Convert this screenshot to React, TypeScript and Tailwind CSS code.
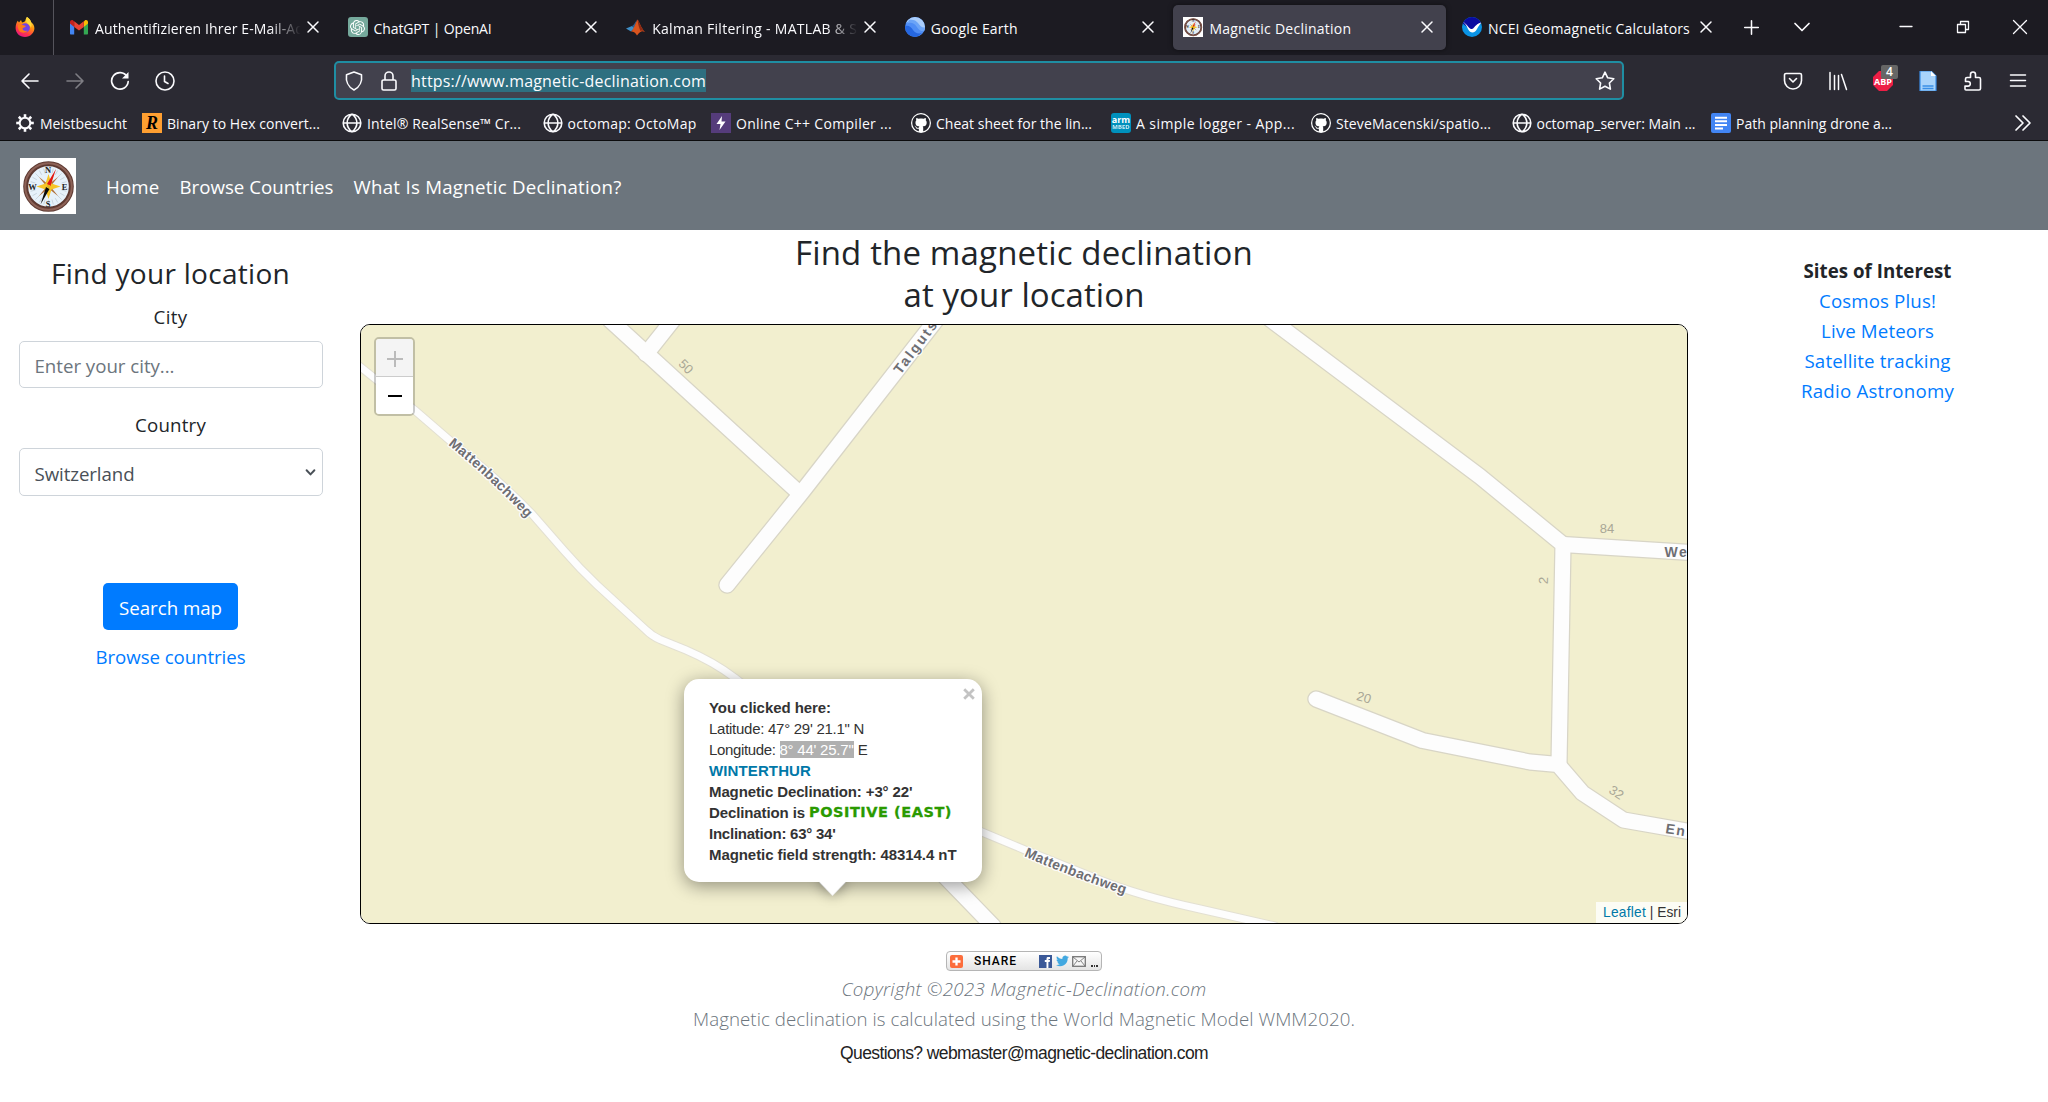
import { useLayoutEffect, useRef, useState, type ReactNode } from "react";
import { FaGithub } from "react-icons/fa";
import { SiOpenai } from "react-icons/si";

/* Text whose tracking is adjusted so that the run is exactly `w` pixels wide. */
function Fit({ w, className = "", children }: { w: number; className?: string; children: string }) {
  const ref = useRef<HTMLSpanElement>(null);
  const [ls, setLs] = useState(0);
  useLayoutEffect(() => {
    if (ref.current) {
      const natural = ref.current.getBoundingClientRect().width;
      setLs((w - natural) / children.length);
    }
  }, []);
  return (
    <span ref={ref} className={`inline-block whitespace-pre ${className}`} style={{ letterSpacing: `${ls}px` }}>
      {children}
    </span>
  );
}

/* ---------- favicons ---------- */
const Firefox = () => (
  <svg width="20" height="20" viewBox="0 0 20 20">
    <defs>
      <linearGradient id="ff" x1="0.8" y1="0" x2="0.3" y2="1">
        <stop offset="0" stopColor="#fff44f" />
        <stop offset="0.4" stopColor="#ff980e" />
        <stop offset="0.75" stopColor="#ff3647" />
        <stop offset="1" stopColor="#e31587" />
      </linearGradient>
    </defs>
    <path d="M12 0c2.500 1.500 3.600 3.200 4 5 1.800 1.300 3.400 3.500 3.400 6.300C19.400 16 15.300 20 10 20S.6 16 .6 11c0-3.200 1-5.600 2.200-7.200L4 5.500 6 3l1 2.500c1.200 0 2.700-.6 3.300-1.700C10.700 2.500 11 1 12 0z" fill="url(#ff)" />
    <circle cx="10.300" cy="10.800" r="4.600" fill="#7542e5" />
    <path d="M3 8c2-1 4-.5 5.500.3L11 9c-1 1.800-3 1.500-3.500 2.500.2 2 2.500 3 5 2-1.500 2.600-5.500 3-8 .8C3.300 12.800 2.600 10 3 8z" fill="#ff7a1a" />
    <path d="M12 0c2.500 1.500 3.600 3.200 4 5 .8 2 .8 4-.2 6-.3-3-3.400-3.700-4.300-6C11 3.500 11 1.500 12 0z" fill="#ffd83a" />
  </svg>
);
const Gmail = () => (
  <svg width="20" height="20" viewBox="0 0 20 20">
    <path d="M1 5.500v11c0 .6.400 1 1 1h3.200V9.500z" fill="#4285f4" />
    <path d="M19 5.500v11c0 .6-.4 1-1 1h-3.200V9.500z" fill="#34a853" />
    <path d="M1 5v1.500l4.200 3.600V4.700L4 3.300C2.800 2.400 1 3.300 1 5z" fill="#c5221f" />
    <path d="M19 5v1.500l-4.200 3.600V4.700L16 3.300c1.200-.9 3 0 3 1.700z" fill="#fbbc04" />
    <path d="M5.200 4.300 10 8l4.800-3.700v5.600L10 13.600 5.200 9.900z" fill="#ea4335" />
  </svg>
);
const ChatGpt = () => (
  <span className="flex size-5 items-center justify-center rounded-[3px] bg-[#75a99c] text-white">
    <SiOpenai size={15} />
  </span>
);
const Matlab = () => (
  <svg width="20" height="20" viewBox="0 0 20 20">
    <path d="M0 11.500 6 9l2.500 2-3.500 3.500z" fill="#3f8fc8" />
    <path d="M6 9c2-1 3-3.500 5-6.500L8.500 11z" fill="#2a5f93" />
    <path d="M5 14.500C7.500 13 9 7 11.500 2.500 13 4 15 11 19 15c-3-1.500-4.500-1-8 3.500-1.500-2.500-3-4-6-4z" fill="#d9541e" />
    <path d="M11.500 2.500C13 4 15 11 19 15c-3-1.500-3-2-4.500-1-1.500-3-2.500-7-3-11.500z" fill="#8c2a14" />
  </svg>
);
const Earth = () => (
  <svg width="20" height="20" viewBox="0 0 20 20">
    <defs>
      <clipPath id="ec"><circle cx="10" cy="10" r="10" /></clipPath>
    </defs>
    <g clipPath="url(#ec)">
      <rect width="20" height="20" fill="#4e8df5" />
      <path d="M0 0h20v13c-3 1-5-1-7-4S7 4 3 5L0 6z" fill="#a9cdfb" />
      <path d="M4 3c3-1 7 0 9 3s4 5 7 4.500V14c-4 1-6-1-8.500-4.500S6 5 2 6.500z" fill="#6ba4f7" />
      <path d="M0 9c4-1 6 1 8 4s5 4 9 3l-5 4H0z" fill="#2567e0" />
    </g>
  </svg>
);
const Noaa = () => (
  <svg width="20" height="20" viewBox="0 0 20 20">
    <defs>
      <clipPath id="nc"><circle cx="10" cy="10" r="10" /></clipPath>
    </defs>
    <g clipPath="url(#nc)">
      <rect width="20" height="20" fill="#0a94e6" />
      <path d="M0 0h20v5l-8 8h-3L0 6z" fill="#0a0aa0" />
      <path d="M1 5c2 1 3.500 2.500 5 4.500C7.500 11.500 8.500 12 10 12s3-3.500 6.500-5.500L20 5c-2 2-3.500 4-5 7-1.500 2.600-3 3.500-4.500 3.500S7 14.500 6 12C5 9.500 3.500 7 1 5z" fill="#fff" />
    </g>
  </svg>
);

function Compass({ size }: { size: number }) {
  const ticks = Array.from({ length: 24 }, (_, i) => i * 15);
  return (
    <svg width={size} height={size} viewBox="0 0 56 56" className="shrink-0 bg-white">
      <circle cx="28.500" cy="28.500" r="22.800" fill="#e6f1fa" stroke="#5e3a32" strokeWidth="5" />
      <circle cx="28.500" cy="28.500" r="23.300" fill="none" stroke="#8d6257" strokeWidth="2" />
      {ticks.map((a) => (
        <path key={a} d="M28.500 10v5" stroke="#b9c6d0" strokeWidth="0.600" transform={`rotate(${a} 28.500 28.500)`} />
      ))}
      <path d="m18.500 18.500 8 6.500h4l8-6.500-6.500 8v4l6.500 8-8-6.500h-4l-8 6.500 6.500-8v-4z" fill="#b0703a" />
      <path d="m28.500 16 3 9.500 9 3-9 3-3 9.500-3-9.500-9-3 9-3z" fill="#f7c526" />
      <path d="M36 11l-5.500 17-3.500-2z" fill="#e3170f" />
      <path d="M20.500 46.500l5.500-17.500 3.500 2z" fill="#0a0a0a" />
      <circle cx="28.500" cy="28.500" r="1.800" fill="#e0b520" />
      <g fontFamily="Liberation Serif, serif" fontWeight="700" fontSize="8.500" fill="#222" textAnchor="middle">
        <text x="28" y="15">N</text>
        <text x="28" y="48.500">S</text>
        <text x="12.500" y="31.500">W</text>
        <text x="44.500" y="31.500">E</text>
      </g>
    </svg>
  );
}

/* ---------- small line icons ---------- */
function Line({ d, size = 20, sw = 1.6, className = "" }: { d: string; size?: number; sw?: number; className?: string }) {
  return (
    <svg width={size} height={size} viewBox="0 0 20 20" fill="none" stroke="currentColor" strokeWidth={sw} strokeLinecap="round" strokeLinejoin="round" className={`shrink-0 ${className}`}>
      <path d={d} />
    </svg>
  );
}
const X = "M5 5l10 10M15 5L5 15";

const Globe = () => <Line sw={1.6} d="M10 1.200a8.800 8.800 0 1 0 0 17.600a8.800 8.800 0 1 0 0-17.600M1.500 10h17M10 1.200C3.500 6 3.500 14 10 18.800M10 1.200c6.500 4.800 6.500 12.800 0 17.600" />;
const Gear = () => (
  <svg width="20" height="20" viewBox="0 0 20 20" fill="none" stroke="#fbfbfe">
    <circle cx="10" cy="10" r="5.300" strokeWidth="2" />
    {[0, 45, 90, 135, 180, 225, 270, 315].map((a) => (
      <path key={a} d="M10 4.500V1.200" strokeWidth="2.600" transform={`rotate(${a} 10 10)`} />
    ))}
  </svg>
);
const HexR = () => (
  <span className="flex size-5 items-center justify-center bg-[#ff9f31] font-['Liberation_Serif',serif] text-[18px] leading-none font-bold text-black italic">R</span>
);
const Bolt = () => (
  <svg width="20" height="20" viewBox="0 0 20 20">
    <rect width="20" height="20" fill="#553c7b" />
    <path d="M11 3 5.500 11h4L8.500 17 14.500 8.500h-4z" fill="#fff" />
  </svg>
);
const Github = () => (
  <span className="flex size-5 items-center justify-center rounded-full bg-white text-[#24242c]">
    <FaGithub size={18} />
  </span>
);
const Arm = () => (
  <span className="flex size-5 flex-col items-center justify-center rounded-[3px] bg-[#0091bd] font-['Open_Sans',sans-serif] font-bold text-white">
    <span className="text-[9px] leading-[8px]">arm</span>
    <span className="text-[6px] leading-[7px] opacity-80">MBED</span>
  </span>
);
const Docs = () => (
  <svg width="20" height="20" viewBox="0 0 20 20">
    <rect width="20" height="20" rx="2" fill="#4285f4" />
    <path d="M4 4.700h12M4 8.300h12M4 11.900h12M4 15.500h8" stroke="#fff" strokeWidth="2" />
  </svg>
);

/* ---------- browser chrome ---------- */
function Tab({ icon, title, w, active = false, fade = false }: { icon: ReactNode; title: string; w: number; active?: boolean; fade?: boolean }) {
  return (
    <div className="h-full w-[278.600px] shrink-0 px-[3px] pt-[5px] pb-[5px]">
      <div className={`flex h-[45px] items-center rounded-[5px] pr-[10px] pb-[1px] pl-[10px] ${active ? "bg-[#42414d] shadow-[0_0_5px_rgba(0,0,0,.5)]" : ""}`}>
        <span className="flex size-5 shrink-0">{icon}</span>
        <div className={`ml-[6px] flex-1 overflow-hidden ${fade ? "[mask-image:linear-gradient(to_right,#000_84%,transparent_99%)]" : ""}`}>
          <Fit w={w} className="text-[14px] leading-5">{title}</Fit>
        </div>
        <Line d={X} size={20} sw={1.500} className="-mr-[1px]" />
      </div>
    </div>
  );
}

function Bookmark({ icon, title, w, slot }: { icon: ReactNode; title: string; w: number; slot: string }) {
  return (
    <div className={`flex shrink-0 items-center gap-[5px] ${slot}`}>
      <span className="flex size-5 shrink-0">{icon}</span>
      <Fit w={w} className="mt-[2px] text-[14px] leading-5">{title}</Fit>
    </div>
  );
}

function BrowserChrome() {
  return (
    <header className="bg-[#2b2a33] text-[#fbfbfe]">
      <div className="flex h-[55px] items-center bg-[#1c1b22]">
        <div className="flex h-full w-[54px] items-center border-r border-[#55545c] pb-[1px] pl-[15px]"><Firefox /></div>
        <div className="ml-[2px] flex h-full">
          <Tab icon={<Gmail />} title="Authentifizieren Ihrer E-Mail-Ad" w={209} fade />
          <Tab icon={<ChatGpt />} title="ChatGPT | OpenAI" w={118} />
          <Tab icon={<Matlab />} title="Kalman Filtering - MATLAB & S" w={205} fade />
          <Tab icon={<Earth />} title="Google Earth" w={87} />
          <Tab icon={<Compass size={20} />} title="Magnetic Declination" w={142} active />
          <Tab icon={<Noaa />} title="NCEI Geomagnetic Calculators" w={202} />
        </div>
        <div className="flex items-center pb-[1px]">
          <Line d="M10 2v16M2 10h16" size={17} sw={1.800} className="ml-[15px]" />
          <Line d="M3 6.500l7 7 7-7" size={20} sw={1.700} className="ml-[32px]" />
          <Line d="M4 9.500h12" size={20} sw={1.300} className="ml-[84px]" />
          <Line d="M4.500 7.500h8v8h-8zM7.500 7.500v-3h8v8h-3" size={20} sw={1.300} className="ml-[37px]" />
          <Line d="M3.500 3.500l13 13M16.500 3.500l-13 13" size={20} sw={1.300} className="ml-[37px]" />
        </div>
      </div>

      <div className="flex h-[51px] items-center">
        <div className="flex w-[334px] gap-[25px] pl-[20px]">
          <Line d="M18 10H2M9 3L2 10l7 7" />
          <Line d="M2 10h16M11 3l7 7-7 7" className="opacity-40" />
          <svg width="20" height="20" viewBox="0 0 20 20" fill="none" stroke="currentColor" strokeWidth="1.700" strokeLinecap="round">
            <path d="M17 5.500a8.300 8.300 0 1 0 1.200 5" />
            <path d="M18.500 1v6.500H12z" fill="currentColor" stroke="none" />
          </svg>
          <Line d="M10 1a9 9 0 1 0 0 18a9 9 0 1 0 0-18M9.500 5v5.500l3.500 2" />
        </div>
        <div className="flex h-[39px] w-[1290px] items-center rounded-[5px] border-2 border-[#1f8ea3] bg-[#42414d] pr-[7px] pl-[8px]">
          <Line d="M10 1l7.500 2.800c.8 6-1.500 12.200-7.500 15.200C4 16 1.700 9.800 2.500 3.800z" />
          <Line d="M4.500 9h11a1.500 1.500 0 0 1 1.500 1.500v7a1.500 1.500 0 0 1-1.500 1.500h-11A1.500 1.500 0 0 1 3 17.500v-7A1.500 1.500 0 0 1 4.500 9M6 9V5a4 4 0 0 1 8 0v4" className="ml-[15px]" />
          <span className="ml-[12px] flex h-[23px] items-center bg-[#2e6f80]"><Fit w={295} className="pt-[2px] text-[16px] leading-[21px]">https://www.magnetic-declination.com</Fit></span>
          <Line d="M10 1.200l2.700 5.600 6.100.9-4.400 4.300 1 6.100L10 15.200l-5.400 2.900 1-6.100L1.200 7.700l6.100-.9z" className="ml-auto" />
        </div>
        <div className="ml-[159px] flex items-center gap-[25px]">
          <Line d="M3 2.500h14a1.500 1.500 0 0 1 1.500 1.500v5.500a8.500 8.500 0 0 1-17 0V4A1.500 1.500 0 0 1 3 2.500M6.500 7.500l3.500 3.500 3.500-3.500" />
          <Line d="M2 1.500v17M6.500 4.500v14M10.500 4.500v14M13.500 3.500l5 15" sw={1.500} />
          <div className="relative size-5">
            <svg width="20" height="20" viewBox="0 0 20 20">
              <path d="M6 0h8l6 6v8l-6 6H6l-6-6V6z" fill="#ed1e45" />
              <text x="10" y="13.500" textAnchor="middle" fontSize="9" fontWeight="700" fontFamily="Open Sans, sans-serif" fill="#fff">ABP</text>
            </svg>
            <span className="absolute -top-[6px] left-[8px] flex h-[14px] w-[17px] items-center justify-center rounded-[2px] bg-[#666] text-[12px] leading-none font-semibold text-white">4</span>
          </div>
          <svg width="20" height="20" viewBox="0 0 20 20">
            <path d="M2 0h11l5 5v15H2z" fill="#a9d4fb" stroke="#3a8ee6" strokeWidth="1.200" />
            <path d="M13 0v5h5z" fill="#fff" />
            <path d="M4.500 15h11M4.500 17.500h11" stroke="#3a8ee6" strokeWidth="1.300" />
          </svg>
          <Line d="M3 19h13a1.500 1.500 0 0 0 1.500-1.500V8A1.500 1.500 0 0 0 16 6.500h-3.500V3.500a2.500 2.500 0 0 0-5 0v3H4A1.500 1.500 0 0 0 2.500 8v2.500H5a2.300 2.300 0 0 1 0 4.600H2v2.900A1 1 0 0 0 3 19" />
          <Line d="M2.500 4h15M2.500 9.500h15M2.500 15h15" sw={1.500} />
        </div>
      </div>

      <div className="flex h-[35px] items-center border-b border-[#0c0c0d] pl-[15px]">
        <Bookmark icon={<Gear />} title="Meistbesucht" w={87} slot="w-[127px]" />
        <Bookmark icon={<HexR />} title="Binary to Hex convert..." w={153} slot="w-[200px]" />
        <Bookmark icon={<Globe />} title="Intel® RealSense™ Cr..." w={154} slot="w-[200.500px]" />
        <Bookmark icon={<Globe />} title="octomap: OctoMap" w={129} slot="w-[168.500px]" />
        <Bookmark icon={<Bolt />} title="Online C++ Compiler ..." w={156} slot="w-[200px]" />
        <Bookmark icon={<Github />} title="Cheat sheet for the lin..." w={156} slot="w-[200px]" />
        <Bookmark icon={<Arm />} title="A simple logger - App..." w={159} slot="w-[200px]" />
        <Bookmark icon={<Github />} title="SteveMacenski/spatio..." w={155} slot="w-[200.500px]" />
        <Bookmark icon={<Globe />} title="octomap_server: Main ..." w={159} slot="w-[199.500px]" />
        <Bookmark icon={<Docs />} title="Path planning drone a..." w={156} slot="w-[200px]" />
        <Line d="M3 3l7 7-7 7M10 3l7 7-7 7" sw={1.700} className="ml-auto mr-[15px]" />
      </div>
    </header>
  );
}

/* ---------- map ---------- */
const WIDE = [
  "M610 320 L797 491",
  "M673 320 L646 354",
  "M936 320 L802 492 L727 585",
  "M1270 319 L1480 476.500 L1563 544.500 L1559 763",
  "M1563 544.500 L1692 552.500",
  "M1316 699 L1422.500 740.500 Q1480 752 1530 762 L1558 764.500 L1582.500 793 L1623.500 820 L1692 832",
  "M945 876.500 L993 926",
];
const NARROW = "M358 365 L414.500 410 L451 441.500 Q495 476 532 514 L563.500 550 Q580 569 597 585 L646 630 Q652 636 660 639.500 L686 650 Q714 662 735 678 C800 730 900 795 982 832 L1025 850 L1100 880 Q1140 896 1200 909 L1275 926";

function MapCanvas() {
  return (
    <svg className="block" width="1326" height="598" viewBox="361 325 1326 598">
      <rect x="360" y="324" width="1330" height="600" fill="#f2efcf" />
      <g fill="none" strokeLinecap="round" strokeLinejoin="round">
        <path d={NARROW} stroke="#e3e0d2" strokeWidth="9" />
        {WIDE.map((d) => <path key={d} d={d} stroke="#d8d5c6" strokeWidth="17.500" />)}
        <path d={NARROW} stroke="#fdfdfd" strokeWidth="7" />
        {WIDE.map((d) => <path key={d} d={d} stroke="#fdfdfd" strokeWidth="15" />)}
      </g>
      <defs>
        <path id="lab1" d="M448 445 Q490 478 538 530" />
        <path id="lab2" d="M1024 856 Q1070 877 1142 900" />
      </defs>
      <g fontFamily="Liberation Sans, Arial, sans-serif" fontWeight="700" fontSize="14" fill="#6e6e73" stroke="#fdfdfd" strokeWidth="2.500" paintOrder="stroke" strokeLinejoin="round">
        <text textLength="108"><textPath href="#lab1" textLength="108">Mattenbachweg</textPath></text>
        <text textLength="108"><textPath href="#lab2" textLength="108">Mattenbachweg</textPath></text>
        <text x="0" y="0" textLength="62" transform="translate(900.500 375) rotate(-53)">Talguts</text>
        <text x="1664.500" y="557" letterSpacing="1.500">We</text>
        <text x="0" y="0" letterSpacing="1.500" transform="translate(1665 833) rotate(9)">En</text>
      </g>
      <g fontFamily="Liberation Sans, Arial, sans-serif" fontSize="13" fill="#a9a796" textAnchor="middle">
        <text transform="translate(686 366.500) rotate(45)" y="4.500">50</text>
        <text transform="translate(1607 528.500)" y="4.500">84</text>
        <text transform="translate(1543.500 580.500) rotate(-88)" y="4.500">2</text>
        <text transform="translate(1364 697.500) rotate(16)" y="4.500">20</text>
        <text transform="translate(1616.500 792.500) rotate(33)" y="4.500">32</text>
      </g>
    </svg>
  );
}

function Popup() {
  return (
    <>
      <span className="absolute top-[548px] left-[462px] size-[19px] rotate-45 bg-white shadow-[0_0_14px_rgba(0,0,0,.4)]" />
      <div className="absolute top-[354px] left-[323px] h-[203px] w-[298px] rounded-[15px] bg-white pt-[18px] pl-[25px] text-[15px] leading-[21px] text-[#333] shadow-[0_4px_18px_rgba(0,0,0,.4)]">
        <span className="absolute -bottom-[9px] left-[139px] size-[19px] rotate-45 bg-white" />
        <svg className="absolute top-[9px] right-[7px]" width="12" height="12" viewBox="0 0 12 12"><path d="M1.200 1.200l9.600 9.600M10.800 1.200L1.200 10.800" stroke="#c3c3c3" strokeWidth="2.800" /></svg>
        <div className="relative flex flex-col items-start">
          <Fit w={122} className="font-bold">You clicked here:</Fit>
          <Fit w={155}>{"Latitude: 47° 29' 21.1\" N"}</Fit>
          <div className="flex items-center">
            <Fit w={70.500}>{"Longitude: "}</Fit>
            <span className="flex h-[17px] items-center bg-[#b0b0b0] text-white"><Fit w={74}>{"8° 44' 25.7\""}</Fit></span>
            <Fit w={14.500}>{" E"}</Fit>
          </div>
          <Fit w={102} className="font-bold text-[#0078a8]">WINTERTHUR</Fit>
          <Fit w={203.500} className="font-bold">{"Magnetic Declination: +3° 22'"}</Fit>
          <div className="flex">
            <Fit w={100} className="font-bold">{"Declination is "}</Fit>
            <Fit w={143} className="font-['DejaVu_Sans',sans-serif] text-[14.500px] font-bold text-[#2a9a00] [-webkit-text-stroke:0.300px_#2a9a00]">POSITIVE (EAST)</Fit>
          </div>
          <Fit w={126.500} className="font-bold">{"Inclination: 63° 34'"}</Fit>
          <Fit w={247.500} className="font-bold">Magnetic field strength: 48314.4 nT</Fit>
        </div>
      </div>
    </>
  );
}

function LeafletMap() {
  return (
    <div className="relative h-[600px] w-[1328px] overflow-hidden rounded-[10px] border border-black font-['Liberation_Sans',Arial,sans-serif]">
      <MapCanvas />
      <div className="absolute top-[12px] left-[13px] h-[79px] w-[41px] overflow-hidden rounded-[5px] border-2 border-black/20 bg-clip-padding">
        <div className="flex h-[38px] items-center justify-center border-b border-[#ccc] bg-[#f4f4f4] pt-[2px] pl-[1px] text-[#bbb]">
          <svg width="16" height="16" viewBox="0 0 16 16"><path d="M8 0v16M0 8h16" stroke="currentColor" strokeWidth="2" /></svg>
        </div>
        <div className="flex h-[37px] items-center justify-center bg-white pl-[1px] text-black">
          <svg width="14" height="2" viewBox="0 0 14 2"><path d="M0 1h14" stroke="currentColor" strokeWidth="2" /></svg>
        </div>
      </div>
      <div className="absolute right-0 bottom-0 flex h-[21px] w-[91px] items-center bg-white/80 pl-[7px] text-[13.750px] leading-[21px] text-[#333]">
        <Fit w={43} className="text-[#0078a8]">Leaflet</Fit>
        <Fit w={35}>{" | Esri"}</Fit>
      </div>
      <Popup />
    </div>
  );
}

function ShareButton() {
  return (
    <div className="flex h-[20px] w-[156px] items-center rounded-[4px] border border-[#b5b5b5] bg-linear-to-b from-white to-[#e4e4e4] pl-[3px]">
      <svg width="13" height="13" viewBox="0 0 13 13"><rect width="13" height="13" rx="2" fill="#fc6d3c" /><path d="M6.500 2.500v8M2.500 6.500h8" stroke="#fff" strokeWidth="2.300" /></svg>
      <span className="ml-[11px] flex w-[65px]"><Fit w={43} className="font-['Roboto',sans-serif] text-[12px] leading-none font-medium text-black">SHARE</Fit></span>
      <svg width="13" height="13" viewBox="0 0 13 13"><rect width="13" height="13" fill="#3b5998" /><path d="M7.500 13V7H5.800V5h1.700V3.800C7.500 2.400 8.300 2 9.400 2H11v2H9.900c-.4 0-.5.200-.5.500V5H11l-.3 2H9.400v6z" fill="#fff" /></svg>
      <svg className="ml-[4px]" width="13" height="12" viewBox="0 0 24 20"><path d="M24 2.500c-.9.400-1.800.7-2.800.8 1-.6 1.800-1.600 2.200-2.700-1 .6-2 1-3.100 1.200A4.900 4.900 0 0 0 11.900 6.300C7.800 6.100 4.200 4.100 1.700 1.100c-1.300 2.300-.7 5.200 1.500 6.600-.8 0-1.600-.2-2.200-.6 0 2.300 1.600 4.400 3.900 4.900-.7.200-1.500.2-2.200.1.600 2 2.400 3.400 4.600 3.400A9.900 9.900 0 0 1 0 17.500 14 14 0 0 0 21.500 5c1-.7 1.800-1.600 2.500-2.500z" fill="#42a8e0" /></svg>
      <svg className="ml-[3px]" width="14" height="11" viewBox="0 0 14 11" fill="#f6f6f6" stroke="#777" strokeWidth="1.300"><rect x="0.700" y="0.700" width="12.600" height="9.600" /><path d="M1 1l6 5 6-5M1 10l4-5M13 10L9 5" fill="none" strokeWidth="0.900" /></svg>
      <span className="mt-[10px] ml-[5px] flex gap-[1px]"><i className="size-[1.500px] bg-[#333]" /><i className="size-[1.500px] bg-[#333]" /><i className="size-[1.500px] bg-[#333]" /></span>
    </div>
  );
}

/* ---------- page ---------- */
export default function App() {
  return (
    <div className="h-[1102px] w-[2048px] overflow-hidden bg-white font-['Open_Sans','Noto_Sans',sans-serif] text-[18.700px] leading-[30px] text-[#212529]">
      <BrowserChrome />

      <nav className="flex h-[89px] items-center bg-[#6c757d] pl-[20px] text-white">
        <Compass size={56} />
        <div className="flex gap-[20px] pt-[2px] pl-[30px]">
          <Fit w={53.500}>Home</Fit>
          <Fit w={154}>Browse Countries</Fit>
          <Fit w={268}>What Is Magnetic Declination?</Fit>
        </div>
      </nav>

      <div className="flex">
        <aside className="flex w-[341px] flex-col items-center pt-[26px]">
          <h4 className="h-[36px] text-[28px] leading-[35px]"><Fit w={239}>Find your location</Fit></h4>
          <label className="mt-[10px] h-[30px]"><Fit w={34}>City</Fit></label>
          <div className="mt-[9px] h-[47px] w-[304px] rounded-[5px] border border-[#ced4da] pt-[9px] pl-[15px] text-[#6c757d]"><Fit w={140}>Enter your city...</Fit></div>
          <label className="mt-[22px] h-[30px]"><Fit w={71}>Country</Fit></label>
          <div className="mt-[8px] flex h-[48px] w-[304px] justify-between rounded-[5px] border border-[#ced4da] pt-[10px] pr-[5px] pl-[15px] text-[#495057]">
            <Fit w={100}>Switzerland</Fit>
            <Line d="M4 6.500l6 6.500 6-6.500" size={13} sw={3} className="mt-[7px]" />
          </div>
          <div className="mt-[87px] h-[47px] w-[135px] rounded-[5px] bg-[#007bff] pt-[10px] text-center text-white"><Fit w={103}>Search map</Fit></div>
          <a className="mt-[12px] h-[30px] text-[#007bff]"><Fit w={150}>Browse countries</Fit></a>
        </aside>

        <main className="flex w-[1366px] flex-col items-center">
          <h1 className="flex h-[84px] flex-col items-center pt-[2px] text-[33px] leading-[42px]">
            <Fit w={458}>Find the magnetic declination</Fit>
            <Fit w={241}>at your location</Fit>
          </h1>
          <div className="mt-[10px]"><LeafletMap /></div>
          <footer className="mt-[27px] flex flex-col items-center font-light text-[#6c757d]">
            <ShareButton />
            <Fit w={365} className="mt-[3px] italic">Copyright ©2023 Magnetic-Declination.com</Fit>
            <Fit w={662}>Magnetic declination is calculated using the World Magnetic Model WMM2020.</Fit>
            <Fit w={368} className="mt-[4px] font-['Liberation_Sans',Arial,sans-serif] text-[17.500px] font-normal text-[#222]">Questions? webmaster@magnetic-declination.com</Fit>
          </footer>
        </main>

        <aside className="flex w-[341px] flex-col items-center pt-[26px] text-[#007bff]">
          <Fit w={148} className="font-bold text-[#212529]">Sites of Interest</Fit>
          <Fit w={117}>Cosmos Plus!</Fit>
          <Fit w={113}>Live Meteors</Fit>
          <Fit w={146}>Satellite tracking</Fit>
          <Fit w={153}>Radio Astronomy</Fit>
        </aside>
      </div>
    </div>
  );
}
